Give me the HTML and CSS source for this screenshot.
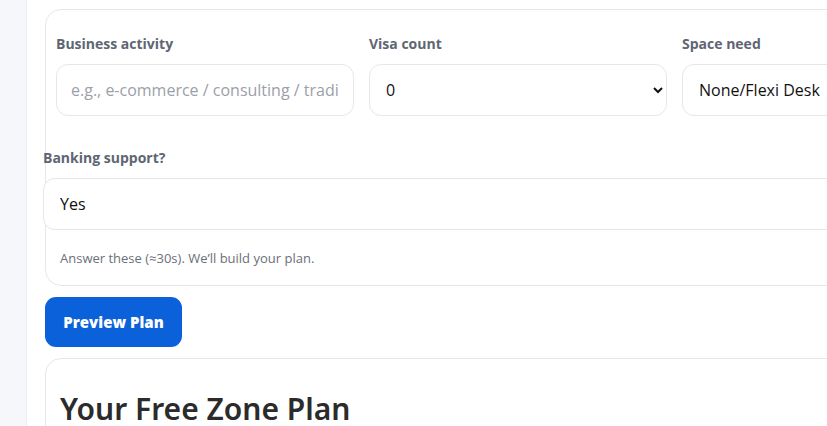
FILE: index.html
```html
<!DOCTYPE html>
<html lang="en">
<head>
<meta charset="utf-8">
<title>Free Zone Plan</title>
<link rel="stylesheet" href="styles.css">
</head>
<body>
<div class="layout">
  <aside class="rail"></aside>
  <main class="main">
    <section class="card form-card">
      <div class="grid">
        <div class="field">
          <label class="label" for="activity">Business activity</label>
          <input class="control" id="activity" type="text" placeholder="e.g., e-commerce / consulting / trading">
        </div>
        <div class="field">
          <label class="label" for="visa">Visa count</label>
          <select class="control select" id="visa">
            <option>0</option>
            <option>1</option>
            <option>2</option>
          </select>
        </div>
        <div class="field">
          <label class="label" for="space">Space need</label>
          <select class="control select" id="space">
            <option>None/Flexi Desk</option>
            <option>Office</option>
          </select>
        </div>
        <div class="field field-wide">
          <label class="label" for="bank">Banking support?</label>
          <select class="control select" id="bank">
            <option>Yes</option>
            <option>No</option>
          </select>
        </div>
      </div>
      <p class="note">Answer these (≈30s). We’ll build your plan.</p>
    </section>
    <button class="btn" type="button">Preview Plan</button>
    <section class="card plan-card">
      <h2 class="plan-title">Your Free Zone Plan</h2>
    </section>
  </main>
</div>
</body>
</html>
```
FILE: styles.css
```css
* { box-sizing: border-box; }
html, body { margin: 0; padding: 0; background: #ffffff; }
body {
  font-family: "Open Sans", "Noto Sans", Arial, sans-serif;
  color: #1f2328;
  overflow: hidden;
}
.layout { display: flex; min-height: 426px; }
.rail {
  flex: 0 0 27px;
  background: #f6f7fb;
  border-right: 1px solid #eef0f6;
}
.main {
  flex: 1;
  padding: 9px 0 0 18px;
  min-width: 0;
}
.card {
  width: 1000px;
  background: #fff;
  border: 1px solid #e6e7ee;
  border-radius: 16px;
}
.form-card { padding: 24px 10px 0 10px; }
.grid {
  display: grid;
  grid-template-columns: 298px 298px 298px;
  column-gap: 15px;
  row-gap: 32px;
}
.field { display: flex; flex-direction: column; }
.field-wide {
  grid-column: 1 / -1;
  margin-left: -13px;
  width: 900px;
}
.label {
  font-size: 14px;
  line-height: 20px;
  font-weight: 700;
  color: #5e6673;
  margin-bottom: 10px;
}
.control {
  height: 52px;
  border: 1px solid #e6e7ee;
  border-radius: 12px;
  background: #fff;
  padding: 0 14px;
  font-family: inherit;
  font-size: 16px;
  color: #111;
  outline: none;
}
.control::placeholder { color: #9ca0a8; }
.select { padding: 0 10px 0 12px; }
.note {
  margin: 0;
  padding: 19px 0 18px 4px;
  font-size: 13px;
  line-height: 18px;
  color: #6b6f78;
}
.btn {
  display: block;
  margin-top: 11px;
  width: 137px;
  height: 50px;
  border: 0;
  border-radius: 11px;
  background: #0b61d9;
  color: #fff;
  font-family: "Open Sans", sans-serif;
  font-weight: 800;
  font-size: 15px;
}
.plan-card {
  margin-top: 11px;
  padding: 30px 14px 20px;
}
.plan-title {
  margin: 0;
  font-family: "Noto Sans", sans-serif;
  font-size: 30px;
  line-height: 40px;
  font-weight: 600;
  color: #2b2b2b;
}
```
